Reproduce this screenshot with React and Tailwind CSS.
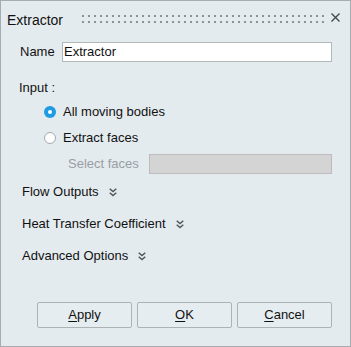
import React from "react";

function Grip() {
  const dots = [];
  for (let i = 0; i < 41; i++) {
    dots.push(<rect key={"a" + i} x={i * 6} y={0} width={2} height={2} fill="#8c9194" />);
    dots.push(<rect key={"b" + i} x={i * 6} y={6} width={2} height={2} fill="#8c9194" />);
  }
  return (
    <svg width="242" height="10" viewBox="0 0 242 10" className="shrink-0">
      {dots}
    </svg>
  );
}

function CloseX() {
  return (
    <svg width="9" height="9" viewBox="0 0 9 9" className="shrink-0 self-start mt-[2px] ml-[7px]">
      <path d="M0.5 0.5 L8.5 8.5 M8.5 0.5 L0.5 8.5" stroke="#444" strokeWidth="1.3" />
    </svg>
  );
}

function DoubleChevron() {
  return (
    <svg width="8" height="9" viewBox="0 0 8 9" className="shrink-0">
      <path d="M0.7 0.7 L4 3.6 L7.3 0.7 M0.7 4.7 L4 7.6 L7.3 4.7" stroke="#50555a" strokeWidth="1.4" fill="none" />
    </svg>
  );
}

function Section({ label }) {
  return (
    <div className="flex items-center h-[18px] pl-[21px] mt-[14px] first:mt-[9px]">
      <span>{label}</span>
      <span className="ml-[10px]">
        <DoubleChevron />
      </span>
    </div>
  );
}

function Btn({ first, rest }) {
  return (
    <button className="w-[95px] h-[26px] border border-[#adb2b5] bg-[#e6edf0] rounded-[2px] flex items-center justify-center text-[13px] text-[#111]">
      <span>
        <span className="underline underline-offset-[2px]">{first}</span>
        {rest}
      </span>
    </button>
  );
}

export default function App() {
  return (
    <div
      className="w-[351px] h-[347px] border border-[#a6acb0] bg-[#e4ebef] flex flex-col text-[13px] text-[#111] leading-[16px]"
      style={{ fontFamily: "'Liberation Sans', Arial, sans-serif" }}
    >
      <div className="flex items-center pt-[10px] pl-[6px]">
        <span className="w-[75px] text-[14px] leading-[18px] shrink-0">Extractor</span>
        <Grip />
        <CloseX />
      </div>

      <div className="flex items-center mt-[13px] pl-[19px]">
        <span className="w-[42px] shrink-0">Name</span>
        <div className="w-[270px] h-[20px] border border-[#b3b8bb] bg-white pl-[1px] flex items-center">
          Extractor
        </div>
      </div>

      <div className="mt-[18px] pl-[18px]">Input :</div>

      <div className="flex items-center h-[18px] mt-[7px] pl-[43px]">
        <span className="w-[12px] h-[12px] rounded-full bg-[#1d9be3] flex items-center justify-center shrink-0">
          <span className="w-[4px] h-[4px] rounded-full bg-white" />
        </span>
        <span className="ml-[7px]">All moving bodies</span>
      </div>

      <div className="flex items-center h-[18px] mt-[8px] pl-[43px]">
        <span className="w-[12px] h-[12px] rounded-full bg-white border border-[#a2a8ac] shrink-0" />
        <span className="ml-[7px]">Extract faces</span>
      </div>

      <div className="flex items-center mt-[7px] pl-[67px]">
        <span className="w-[81px] shrink-0 text-[#999ea2]">Select faces</span>
        <div className="w-[183px] h-[20px] border border-[#bcbcbc] bg-[#d4d4d4]" />
      </div>

      <div className="flex flex-col">
        <Section label="Flow Outputs" />
        <Section label="Heat Transfer Coefficient" />
        <Section label="Advanced Options" />
      </div>

      <div className="flex justify-end gap-[5px] pr-[18px] mt-[37px]">
        <Btn first="A" rest="pply" />
        <Btn first="O" rest="K" />
        <Btn first="C" rest="ancel" />
      </div>
    </div>
  );
}
